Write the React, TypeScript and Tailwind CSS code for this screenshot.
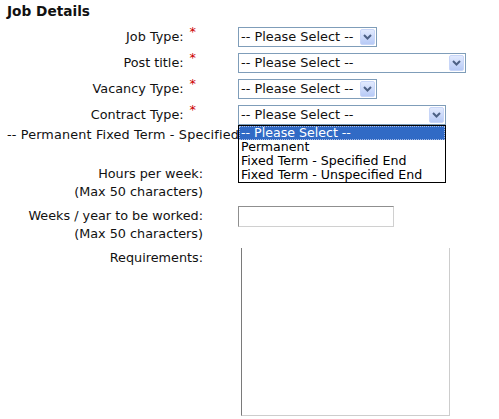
function Chevron() {
  return (
    <svg width="9" height="6" viewBox="0 0 9 6" fill="none">
      <path d="M1 1l3.5 3.5L8 1" stroke="#4d6185" strokeWidth="2" />
    </svg>
  )
}

function FakeSelect({ width }: { width: string }) {
  return (
    <div
      className={`flex h-[20px] items-center border border-[#7f9db9] bg-white pl-[2px] text-[12.9px] leading-none text-[#111] ${width}`}
    >
      <span>-- Please Select --</span>
      <span className="mr-[1px] ml-auto flex h-[16px] w-[15px] items-center justify-center rounded-[2px] border border-[#c8d6f8] bg-gradient-to-b from-[#e2eafe] to-[#b7caf6]">
        <Chevron />
      </span>
    </div>
  )
}

function Required() {
  return <span className="relative -top-[5px] mr-[8px] ml-[6px] text-[#cc0000]">*</span>
}

const selectRows = [
  { label: "Job Type:", width: "w-[139px]" },
  { label: "Post title:", width: "w-[228px]" },
  { label: "Vacancy Type:", width: "w-[139px]" },
  { label: "Contract Type:", width: "w-[208px]" },
]

const contractOptions = [
  "-- Please Select --",
  "Permanent",
  "Fixed Term - Specified End",
  "Fixed Term - Unspecified End",
]

export default function App() {
  return (
    <div className="relative h-[419px] w-[499px] overflow-hidden bg-white font-['DejaVu_Sans',sans-serif] text-[12.8px] text-[#111]">
      <h2 className="h-[24px] pt-[3px] pl-[7px] text-[13.7px] leading-[16px] font-bold">Job Details</h2>

      {selectRows.map((row) => (
        <div key={row.label} className="flex h-[26px] items-center">
          <div className="w-[204px] text-right">
            {row.label}
            <Required />
          </div>
          <div className="ml-[34px]">
            <FakeSelect width={row.width} />
          </div>
        </div>
      ))}

      {/* option text that shows through behind the open list */}
      <div className="ml-[7px] w-[231px] overflow-hidden leading-[14px] tracking-[0.15px] whitespace-nowrap">
        -- Permanent Fixed Term - Specified End Fixed Term - Unspecified End
      </div>

      <div className="mt-[23px] flex">
        <div className="w-[204px] pr-[1px] text-right leading-[18px]">
          Hours per week:
          <br />
          (Max 50 characters)
        </div>
      </div>

      <div className="mt-[6px] flex">
        <div className="w-[204px] pr-[1px] text-right leading-[18px]">
          Weeks / year to be worked:
          <br />
          (Max 50 characters)
        </div>
        <div className="ml-[34px] -mt-[1px] h-[21px] w-[156px] border-t border-r border-b border-l border-t-[#8f8f8f] border-r-[#d0d0d0] border-b-[#d0d0d0] border-l-[#8f8f8f] bg-white" />
      </div>

      <div className="mt-[5px] flex">
        <div className="w-[204px] pt-[1px] pr-[1px] text-right leading-[18px]">Requirements:</div>
        <div className="ml-[37px] h-[168px] w-[209px] border-r border-b border-l border-r-[#cdcdcd] border-b-[#cdcdcd] border-l-[#7a7a7a] bg-white" />
      </div>

      {/* open Contract Type list */}
      <div className="absolute top-[125px] left-[238px] w-[208px] border border-black bg-white text-[12.6px] leading-[14px]">
        {contractOptions.map((option, i) => (
          <div
            key={option}
            className={
              i === 0
                ? "border border-dotted border-[#a9bde6] bg-[#316ac5] pl-[1px] leading-[12px] text-white"
                : "pl-[2px] text-black"
            }
          >
            {option}
          </div>
        ))}
      </div>
    </div>
  )
}
